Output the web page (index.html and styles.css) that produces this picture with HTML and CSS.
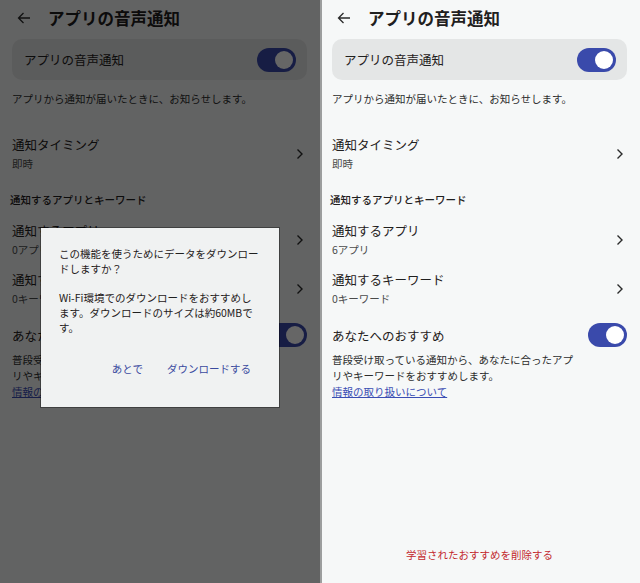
FILE: index.html
```html
<!DOCTYPE html>
<html lang="ja">
  <head>
    <meta charset="UTF-8" />
    <meta name="viewport" content="width=device-width, initial-scale=1.0" />
    <title>アプリの音声通知</title>
    <link rel="stylesheet" href="styles.css">
  </head>
  <body>
    <!-- ダイアログ表示中の画面 -->
    <div class="screen">
      <div class="header">
        <svg class="back" viewBox="0 0 16 16"><path d="M14 8H2.5M7.5 3L2.5 8l5 5" /></svg>
        <h1 class="title">アプリの音声通知</h1>
      </div>
      <div class="card">
        <span>アプリの音声通知</span>
        <span class="switch"><span class="knob"></span></span>
      </div>
      <p class="note">アプリから通知が届いたときに、お知らせします。</p>

      <div class="row first">
        <div>
          <div class="row-title">通知タイミング</div>
          <div class="row-sub">即時</div>
        </div>
        <svg class="chev" viewBox="0 0 8 12"><path d="M1.5 1.5L6 6l-4.5 4.5" /></svg>
      </div>

      <h2 class="section">通知するアプリとキーワード</h2>
      <div class="row after-section">
        <div>
          <div class="row-title">通知するアプリ</div>
          <div class="row-sub">0アプリ</div>
        </div>
        <svg class="chev" viewBox="0 0 8 12"><path d="M1.5 1.5L6 6l-4.5 4.5" /></svg>
      </div>
      <div class="row">
        <div>
          <div class="row-title">通知するキーワード</div>
          <div class="row-sub">0キーワード</div>
        </div>
        <svg class="chev" viewBox="0 0 8 12"><path d="M1.5 1.5L6 6l-4.5 4.5" /></svg>
      </div>

      <div class="reco">
        <span>あなたへのおすすめ</span>
        <span class="switch"><span class="knob"></span></span>
      </div>
      <p class="reco-note">普段受け取っている通知から、あなたに合ったアプリやキーワードをおすすめします。<br><a class="link" href="#">情報の取り扱いについて</a></p>

      <div class="scrim"></div>
      <div class="dialog">
        <p>この機能を使うためにデータをダウンロードしますか？</p>
        <p class="dialog-sub">Wi-Fi環境でのダウンロードをおすすめします。ダウンロードのサイズは約60MBです。</p>
        <div class="dialog-actions">
          <span class="btn">あとで</span>
          <span class="btn">ダウンロードする</span>
        </div>
      </div>
    </div>

    <!-- 通常の画面 -->
    <div class="screen">
      <div class="header">
        <svg class="back" viewBox="0 0 16 16"><path d="M14 8H2.5M7.5 3L2.5 8l5 5" /></svg>
        <h1 class="title">アプリの音声通知</h1>
      </div>
      <div class="card">
        <span>アプリの音声通知</span>
        <span class="switch"><span class="knob"></span></span>
      </div>
      <p class="note">アプリから通知が届いたときに、お知らせします。</p>

      <div class="row first">
        <div>
          <div class="row-title">通知タイミング</div>
          <div class="row-sub">即時</div>
        </div>
        <svg class="chev" viewBox="0 0 8 12"><path d="M1.5 1.5L6 6l-4.5 4.5" /></svg>
      </div>

      <h2 class="section">通知するアプリとキーワード</h2>
      <div class="row after-section">
        <div>
          <div class="row-title">通知するアプリ</div>
          <div class="row-sub">6アプリ</div>
        </div>
        <svg class="chev" viewBox="0 0 8 12"><path d="M1.5 1.5L6 6l-4.5 4.5" /></svg>
      </div>
      <div class="row">
        <div>
          <div class="row-title">通知するキーワード</div>
          <div class="row-sub">0キーワード</div>
        </div>
        <svg class="chev" viewBox="0 0 8 12"><path d="M1.5 1.5L6 6l-4.5 4.5" /></svg>
      </div>

      <div class="reco">
        <span>あなたへのおすすめ</span>
        <span class="switch"><span class="knob"></span></span>
      </div>
      <p class="reco-note">普段受け取っている通知から、あなたに合ったアプリやキーワードをおすすめします。<br><a class="link" href="#">情報の取り扱いについて</a></p>

      <div class="reset">学習されたおすすめを削除する</div>
    </div>
  </body>
</html>
```

FILE: styles.css
```css
* {
  padding: 0;
  margin: 0;
  box-sizing: border-box;
}
body {
  display: flex;
  width: 640px;
  height: 583px;
  font-family: "Noto Sans CJK JP", "Noto Sans", sans-serif;
  color: #1f2020;
  background-color: #f6f8f8;
}
.screen {
  position: relative;
  width: 320px;
  height: 583px;
  display: flex;
  flex-direction: column;
  padding: 0 13px 0 12px;
  background-color: #f6f8f8;
  overflow: hidden;
}
.screen + .screen {
  box-shadow: inset 2px 0 #9c9e9e;
}

/* ヘッダー */
.header {
  height: 36px;
  display: flex;
  align-items: center;
}
.back {
  width: 16px;
  height: 16px;
  margin-left: 4px;
  fill: none;
  stroke: #2a2b2b;
  stroke-width: 1.3;
}
.title {
  margin-left: 16px;
  font-size: 16.5px;
  font-weight: 700;
}

/* メインのスイッチ */
.card {
  margin-top: 3px;
  height: 41px;
  padding: 0 11px 0 12px;
  border-radius: 10px;
  background-color: #e4e6e6;
  display: flex;
  align-items: center;
  justify-content: space-between;
  font-size: 12.5px;
}
.switch {
  width: 39px;
  height: 24px;
  padding: 3px;
  border-radius: 12px;
  background-color: #3a4aab;
  display: flex;
  justify-content: flex-end;
}
.knob {
  width: 18px;
  height: 18px;
  border-radius: 50%;
  background-color: #fff;
}
.note {
  margin-top: 10px;
  font-size: 10.5px;
  line-height: 18px;
  color: #2c2d2d;
}

/* リスト */
.row {
  display: flex;
  align-items: center;
  justify-content: space-between;
  padding: 5px 0 6px;
}
.row.first {
  margin-top: 22px;
}
.row.after-section {
  margin-top: 7px;
}
.row-title {
  font-size: 12.5px;
  line-height: 20px;
}
.row-sub {
  font-size: 10.5px;
  line-height: 18px;
  color: #4a4b4b;
}
.chev {
  width: 8px;
  height: 12px;
  margin-right: 3px;
  fill: none;
  stroke: #2a2b2b;
  stroke-width: 1.4;
}
.section {
  margin-top: 12px;
  margin-left: -2px;
  font-size: 10.5px;
  line-height: 18px;
  font-weight: 500;
}
.reco {
  margin-top: 9px;
  display: flex;
  align-items: center;
  justify-content: space-between;
  font-size: 12.5px;
}
.reco-note {
  width: 246px;
  margin-top: 5px;
  font-size: 10.5px;
  line-height: 16px;
  color: #2c2d2d;
}
.link {
  color: #3a4db3;
  text-decoration: underline;
}
.reset {
  margin-top: auto;
  margin-bottom: 19px;
  text-align: center;
  font-size: 10.5px;
  line-height: 18px;
  color: #c2272c;
}

/* ダイアログ */
.scrim {
  position: absolute;
  top: 0;
  left: 0;
  right: 0;
  bottom: 0;
  background-color: rgba(0, 0, 0, 0.6);
}
.dialog {
  position: absolute;
  left: 41px;
  top: 228px;
  width: 238px;
  height: 179px;
  padding: 18px 19px 0 18px;
  background-color: #f0f2f2;
  box-shadow: 0 0 0 1px rgba(0, 0, 0, 0.35);
  font-size: 10.5px;
  line-height: 15px;
  color: #1f2020;
}
.dialog-sub {
  margin-top: 14px;
}
.dialog-actions {
  margin-top: 25px;
  margin-right: 9px;
  display: flex;
  justify-content: flex-end;
  gap: 24px;
  line-height: 18px;
}
.btn {
  color: #3a4a9f;
}
```
